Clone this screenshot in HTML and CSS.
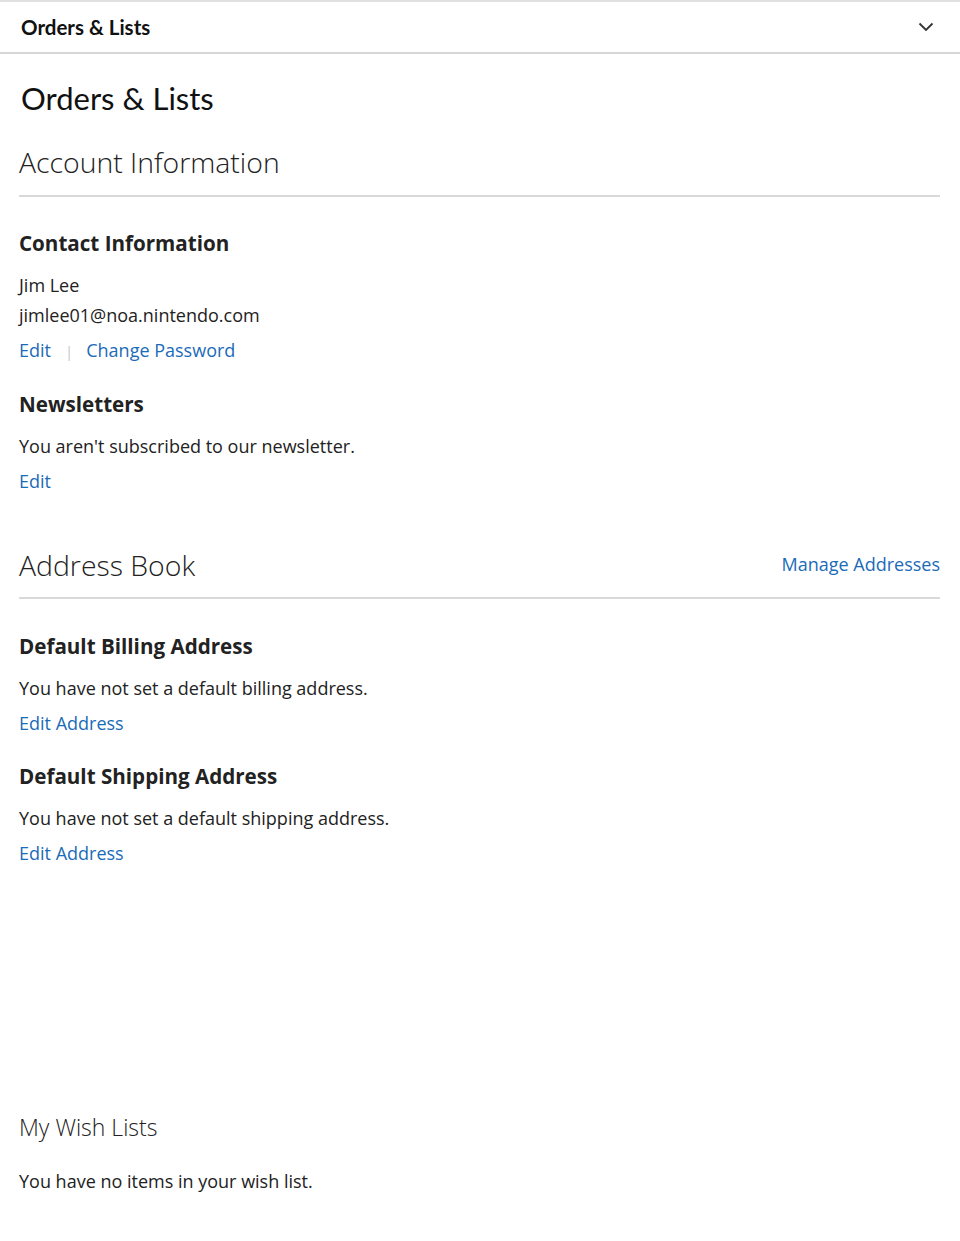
FILE: index.html
```html
<!DOCTYPE html>
<html lang="en">
<head>
<meta charset="utf-8">
<title>Orders &amp; Lists</title>
<link rel="stylesheet" href="styles.css">
</head>
<body>
<div class="topbar">
  <span class="topbar-title">Orders &amp; Lists</span>
  <svg class="chev" width="16" height="10" viewBox="0 0 16 10"><path d="M1.5 1.5 L8 8 L14.5 1.5" fill="none" stroke="#333" stroke-width="1.8"/></svg>
</div>
<main class="content">
  <h1 class="page-title">Orders &amp; Lists</h1>

  <section class="block account">
    <div class="block-head"><h2>Account Information</h2></div>
    <div class="box">
      <h3>Contact Information</h3>
      <p class="line l1">Jim Lee</p>
      <p class="line">jimlee01@noa.nintendo.com</p>
      <div class="actions"><a href="#">Edit</a><span class="sep">|</span><a href="#">Change Password</a></div>
    </div>
    <div class="box">
      <h3>Newsletters</h3>
      <p class="line l1">You aren't subscribed to our newsletter.</p>
      <div class="actions"><a href="#">Edit</a></div>
    </div>
  </section>

  <section class="block address">
    <div class="block-head"><h2>Address Book</h2><a href="#" class="manage">Manage Addresses</a></div>
    <div class="box">
      <h3>Default Billing Address</h3>
      <p class="line l1">You have not set a default billing address.</p>
      <div class="actions"><a href="#">Edit Address</a></div>
    </div>
    <div class="box">
      <h3>Default Shipping Address</h3>
      <p class="line l1">You have not set a default shipping address.</p>
      <div class="actions"><a href="#">Edit Address</a></div>
    </div>
  </section>

  <section class="wish">
    <h2>My Wish Lists</h2>
    <p class="line">You have no items in your wish list.</p>
  </section>
</main>
</body>
</html>
```
FILE: styles.css
```css
* { box-sizing: border-box; }
html, body { margin: 0; padding: 0; background: #fff; }
body { font-family: "Open Sans", "Liberation Sans", sans-serif; color: #222; }

.topbar {
  display: flex;
  align-items: center;
  justify-content: space-between;
  height: 54px;
  border-top: 2px solid #e0e0e0;
  border-bottom: 2px solid #d6d6d6;
  padding: 0 26px 0 21px;
}
.topbar-title {
  font-family: Lato, "Liberation Sans", sans-serif;
  font-weight: 700;
  font-size: 20.5px;
  color: #111;
}
.chev { display: block; }

.content { padding: 0 20px 0 19px; }

.page-title {
  font-family: Lato, "Liberation Sans", sans-serif;
  font-weight: 400;
  font-size: 31px;
  color: #111;
  margin: 0;
  padding-top: 24px;
  padding-bottom: 1px;
  line-height: 40px;
  padding-left: 2px;
}

.block-head {
  display: flex;
  justify-content: space-between;
  align-items: center;
  border-bottom: 2px solid #d9d9d9;
  padding-bottom: 13px;
}
.block-head h2 {
  margin: 0;
  font-weight: 300;
  font-size: 28.4px;
  line-height: 38px;
  color: #222;
}
.block { margin-top: 24px; }

.box { padding-top: 30px; }
.box + .box { padding-top: 21px; }
.account .block-head { padding-bottom: 14px; }
.account .block-head + .box { padding-top: 29px; }
h3 {
  margin: 0;
  font-weight: 700;
  font-size: 20.6px;
  line-height: 34px;
  color: #222;
}
.line {
  margin: 0;
  font-size: 18px;
  line-height: 30px;
  color: #222;
}
.l1 { margin-top: 10px; }
.actions {
  font-size: 18px;
  line-height: 30px;
  margin-top: 5px;
}
a { color: #1a6bb8; text-decoration: none; }
.sep { color: #c8c8c8; margin: 0 13px 0 14px; font-size: 15px; }

.address { margin-top: 50px; }
.manage { font-size: 18px; margin-bottom: 2px; }

.wish { margin-top: 242px; }
.wish h2 {
  margin: 0;
  font-weight: 300;
  font-size: 23px;
  line-height: 34px;
  color: #222;
}
.wish .line { margin-top: 22px; }
```
